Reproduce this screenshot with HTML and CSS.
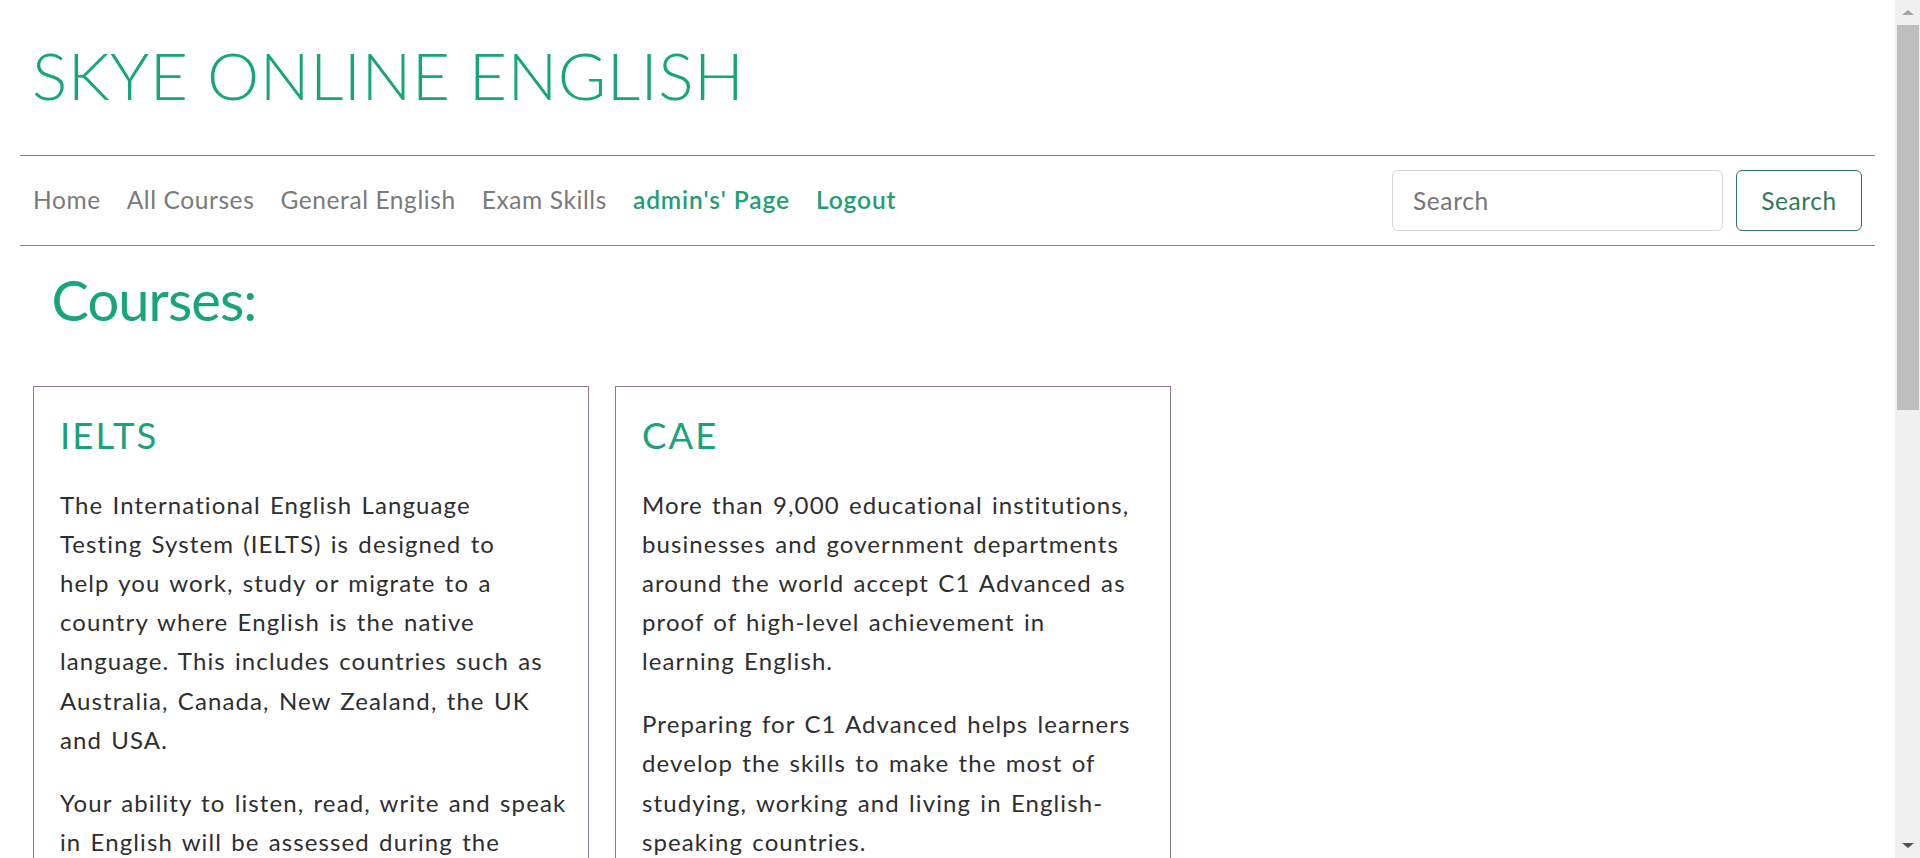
FILE: index.html
```html
<!DOCTYPE html>
<html lang="en">
<head>
<meta charset="utf-8">
<title>Skye Online English - Courses</title>
<link rel="stylesheet" href="styles.css">
</head>
<body>
<div class="page">
  <header class="brand">
    <h1 class="brand-title">SKYE ONLINE ENGLISH</h1>
  </header>
  <nav class="navbar">
    <ul class="nav-links">
      <li><a class="nav-link" href="#">Home</a></li>
      <li><a class="nav-link" href="#">All Courses</a></li>
      <li><a class="nav-link" href="#">General English</a></li>
      <li><a class="nav-link" href="#">Exam Skills</a></li>
      <li><a class="nav-link nav-link-strong" href="#">admin's' Page</a></li>
      <li><a class="nav-link nav-link-strong" href="#">Logout</a></li>
    </ul>
    <form class="search-form">
      <input class="search-input" type="search" placeholder="Search">
      <button class="search-button" type="button">Search</button>
    </form>
  </nav>
  <main class="content">
    <h2 class="section-title">Courses:</h2>
    <div class="cards">
      <article class="card">
        <h3 class="card-title">IELTS</h3>
        <p class="card-text">The International English Language<br>Testing System (IELTS) is designed to<br>help you work, study or migrate to a<br>country where English is the native<br>language. This includes countries such as<br>Australia, Canada, New Zealand, the UK<br>and USA.</p>
        <p class="card-text">Your ability to listen, read, write and speak<br>in English will be assessed during the<br>test. IELTS is graded on a scale of 1-9.</p>
      </article>
      <article class="card">
        <h3 class="card-title">CAE</h3>
        <p class="card-text">More than 9,000 educational institutions,<br>businesses and government departments<br>around the world accept C1 Advanced as<br>proof of high-level achievement in<br>learning English.</p>
        <p class="card-text">Preparing for C1 Advanced helps learners<br>develop the skills to make the most of<br>studying, working and living in English-<br>speaking countries.</p>
      </article>
    </div>
  </main>
</div>
<div class="scrollbar" aria-hidden="true">
  <div class="scroll-btn"><span class="arrow-up"></span></div>
  <div class="scroll-thumb"></div>
  <div class="scroll-track"></div>
  <div class="scroll-btn"><span class="arrow-down"></span></div>
</div>
</body>
</html>
```

FILE: styles.css
```css
html, body {
  margin: 0;
  padding: 0;
  height: 100%;
  overflow: hidden;
  background: #ffffff;
}

body {
  display: flex;
  font-family: "Lato", "Open Sans", sans-serif;
  color: #2e2e2e;
}

.page {
  flex: 1 1 auto;
  min-width: 0;
  height: 100%;
  overflow: hidden;
  padding: 0 20px;
}

.brand-title {
  margin: 35px 0 0 12px;
  font-size: 66px;
  font-weight: 300;
  line-height: 1.2;
  color: #17a57b;
  letter-spacing: 0.45px;
}

.navbar {
  margin-top: 41px;
  display: flex;
  align-items: center;
  padding: 14px 13px;
  border-top: 1px solid #8e7a8c;
  border-bottom: 1px solid #8e7a8c;
}

.nav-links {
  list-style: none;
  margin: 0;
  padding: 0 0 3px 0;
  display: flex;
  gap: 26px;
}

.nav-link {
  font-size: 24.5px;
  font-weight: 400;
  letter-spacing: 0.6px;
  color: #7a7a7a;
  text-decoration: none;
}

.nav-link-strong {
  font-weight: 600;
  letter-spacing: 0.9px;
  color: #1f9e77;
}

.search-form {
  margin: 0 0 0 auto;
  display: flex;
  gap: 13px;
}

.search-input {
  box-sizing: border-box;
  width: 331px;
  height: 61px;
  padding: 0 20px;
  font-family: inherit;
  font-size: 24.5px;
  letter-spacing: 0.6px;
  color: #495057;
  border: 1px solid #d6d6d6;
  border-radius: 6px;
  outline: none;
}

.search-input::placeholder {
  color: #757575;
}

.search-button {
  box-sizing: border-box;
  width: 126px;
  height: 61px;
  padding: 0;
  font-family: inherit;
  font-size: 24.5px;
  letter-spacing: 0.6px;
  color: #2f7a5c;
  background: #ffffff;
  border: 1px solid #2f7a5c;
  border-radius: 6px;
}

.content {
  padding-left: 13px;
}

.section-title {
  margin: 20px 0 0 18.5px;
  font-size: 56px;
  font-weight: 400;
  line-height: 1.2;
  letter-spacing: -0.9px;
  color: #17a57b;
}

.cards {
  margin-top: 53px;
  display: flex;
  gap: 26px;
  align-items: flex-start;
}

.card {
  box-sizing: border-box;
  width: 556px;
  border: 1px solid #8e7a8c;
  padding: 26.5px 26px 0 26px;
}

.card-title {
  margin: 0 0 27px 0;
  font-size: 36.5px;
  font-weight: 400;
  line-height: 1.2;
  letter-spacing: 2.1px;
  color: #1aa27a;
}

.card-text {
  margin: 0 0 23.5px 0;
  font-size: 24px;
  line-height: 39.2px;
  letter-spacing: 1.1px;
  word-spacing: 2px;
  white-space: nowrap;
}

.scrollbar {
  flex: 0 0 25px;
  height: 100%;
  background: #f0f0f0;
  display: flex;
  flex-direction: column;
}

.scroll-btn {
  height: 25px;
  display: flex;
  align-items: center;
  justify-content: center;
}

.scroll-thumb {
  height: 385px;
  margin: 0 1px 0 2px;
  background: #bfbfbf;
}

.scroll-track {
  flex: 1 1 auto;
}

.arrow-up {
  width: 0;
  height: 0;
  border-left: 6.5px solid transparent;
  border-right: 6.5px solid transparent;
  border-bottom: 5px solid #a3a3a3;
}

.arrow-down {
  width: 0;
  height: 0;
  border-left: 6.5px solid transparent;
  border-right: 6.5px solid transparent;
  border-top: 5px solid #505050;
}
```
